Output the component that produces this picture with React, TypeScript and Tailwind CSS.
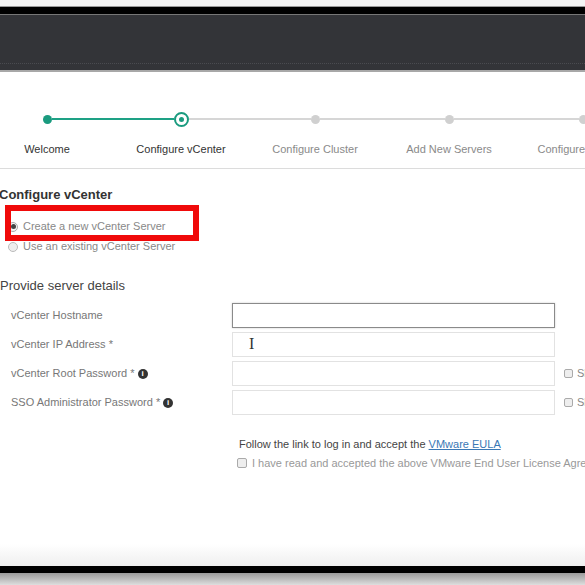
import React from "react";

const steps = [
  { label: "Welcome", left: "none", right: "green", dot: "done" },
  { label: "Configure vCenter", left: "green", right: "gray", dot: "current" },
  { label: "Configure Cluster", left: "gray", right: "gray", dot: "todo" },
  { label: "Add New Servers", left: "gray", right: "gray", dot: "todo" },
  { label: "Configure Network", left: "gray", right: "gray", dot: "todo" },
];

function lineCls(c: string) {
  if (c === "green") return "flex-1 h-[2px] bg-[#1ea185]";
  if (c === "gray") return "flex-1 h-[2px] bg-[#d6d6d6]";
  return "flex-1 h-[2px]";
}

function Dot({ kind }: { kind: string }) {
  if (kind === "done") return <div className="w-[9px] h-[9px] rounded-full bg-[#1a9b7f] shrink-0" />;
  if (kind === "current")
    return (
      <div className="w-[15px] h-[15px] rounded-full border-[2px] border-[#1a9b7f] bg-white flex items-center justify-center shrink-0">
        <div className="w-[5px] h-[5px] rounded-full bg-[#1a9b7f]" />
      </div>
    );
  return <div className="w-[9px] h-[9px] rounded-full bg-[#d0d0d0] shrink-0" />;
}

const fields = [
  { label: "vCenter Hostname", info: false, show: false, focus: true },
  { label: "vCenter IP Address *", info: false, show: false, focus: false, cursor: true },
  { label: "vCenter Root Password *", info: true, show: true, focus: false },
  { label: "SSO Administrator Password *", info: true, show: true, focus: false },
];

function Info() {
  return (
    <span className="inline-flex w-[10px] h-[10px] rounded-full bg-[#333] text-white text-[8px] font-bold leading-none items-center justify-center ml-[3px] align-middle">
      i
    </span>
  );
}

export default function App() {
  return (
    <div
      className="w-[585px] h-[585px] overflow-hidden flex flex-col bg-white"
      style={{ fontFamily: '"Liberation Sans", Arial, sans-serif' }}
    >
      {/* top chrome */}
      <div className="h-[6px] bg-[#f4f4f4] shrink-0" />
      <div className="h-[1px] bg-[#9a9a9a] shrink-0" />
      <div className="h-[7px] bg-black shrink-0" />
      <div className="h-[1px] bg-[#777] shrink-0" />
      <div className="h-[55px] bg-[#333438] shrink-0 flex flex-col justify-end">
        <div className="h-[1px] mb-[6px] border-t border-dotted border-[#4a4b50]" />
      </div>
      <div className="h-[2px] bg-[#a8a8a8] shrink-0" />

      {/* content */}
      <div className="flex-1 relative flex flex-col overflow-hidden">
        {/* stepper */}
        <div className="flex ml-[-20px] mt-[40px] h-[14px] items-center">
          {steps.map((s, i) => (
            <div key={i} className="w-[134px] shrink-0 flex items-center">
              <div className={lineCls(s.left)} />
              <Dot kind={s.dot} />
              <div className={lineCls(s.right)} />
            </div>
          ))}
        </div>
        <div className="flex ml-[-20px] mt-[16px]">
          {steps.map((s, i) => (
            <div
              key={i}
              className={`w-[134px] shrink-0 text-center whitespace-nowrap text-[11px] leading-[14px] ${
                i < 2 ? "text-[#333]" : "text-[#8a8a8a]"
              }`}
            >
              {s.label}
            </div>
          ))}
        </div>
        <div className="h-[1px] bg-[#dcdcdc] mt-[12px]" />

        {/* form */}
        <div className="pt-[18px] relative">
          <div className="text-[13px] font-bold text-[#333] leading-[16px] ml-[-1px]">Configure vCenter</div>
          <div className="mt-[16px] flex flex-col gap-[5px] ml-[8px]">
            <div className="flex items-center gap-[5px] text-[11px] leading-[15px] text-[#888]">
              <span className="w-[10px] h-[10px] rounded-full border border-[#aaa] bg-[#f4f4f4] flex items-center justify-center shrink-0">
                <span className="w-[5px] h-[5px] rounded-full bg-[#444]" />
              </span>
              Create a new vCenter Server
            </div>
            <div className="flex items-center gap-[5px] text-[11px] leading-[15px] text-[#888]">
              <span className="w-[10px] h-[10px] rounded-full border border-[#bbb] bg-[#eee] shrink-0" />
              Use an existing vCenter Server
            </div>
          </div>
          {/* red annotation */}
          <div className="absolute left-[5px] top-[36px] w-[194px] h-[36px] border-[6px] border-[#f00a0a]" />

          <div className="mt-[24px] text-[13px] text-[#444] leading-[16px]">Provide server details</div>

          <div className="mt-[9px] flex flex-col gap-[4px]">
            {fields.map((f, i) => (
              <div key={i} className="flex items-center h-[25px]">
                <div className="w-[232px] shrink-0 pl-[11px] text-[11px] text-[#777] whitespace-nowrap">
                  {f.label}
                  {f.info && <Info />}
                </div>
                <div
                  className={`w-[323px] shrink-0 h-[25px] bg-white relative ${
                    f.focus ? "border-[1.5px] border-[#8a8a8a] shadow-[0_0_2px_rgba(0,0,0,0.2)]" : "border border-[#e2e2e2]"
                  }`}
                >
                  {f.cursor && (
                    <span
                      className="absolute left-[16px] top-[3px] text-[16px] leading-[16px] text-[#333]"
                      style={{ fontFamily: '"Liberation Serif", serif' }}
                    >
                      I
                    </span>
                  )}
                </div>
                {f.show && (
                  <div className="flex items-center shrink-0 ml-[9px] text-[11px] text-[#888] whitespace-nowrap">
                    <span className="w-[9px] h-[9px] border border-[#aaa] rounded-[2px] bg-[#eee] mr-[4px] shrink-0" />
                    Show password
                  </div>
                )}
              </div>
            ))}
          </div>

          <div className="ml-[239px] mt-[22px] text-[11px] text-[#444] leading-[14px] whitespace-nowrap">
            Follow the link to log in and accept the{" "}
            <span className="text-[#3a78b5] underline">VMware EULA</span>
          </div>
          <div className="ml-[237px] mt-[5px] flex items-center text-[11px] text-[#999] leading-[14px] whitespace-nowrap">
            <span className="w-[10px] h-[10px] border border-[#aaa] rounded-[2px] bg-[#eee] mr-[5px] shrink-0" />
            I have read and accepted the above VMware End User License Agreement
          </div>
        </div>
        <div className="flex-1" />
        <div className="h-[22px] bg-gradient-to-b from-white to-[#efefef] shrink-0" />
      </div>

      {/* bottom chrome */}
      <div className="h-[7px] bg-black shrink-0" />
      <div className="h-[12px] bg-gradient-to-b from-[#9a9a9a] to-[#dedede] shrink-0" />
    </div>
  );
}
